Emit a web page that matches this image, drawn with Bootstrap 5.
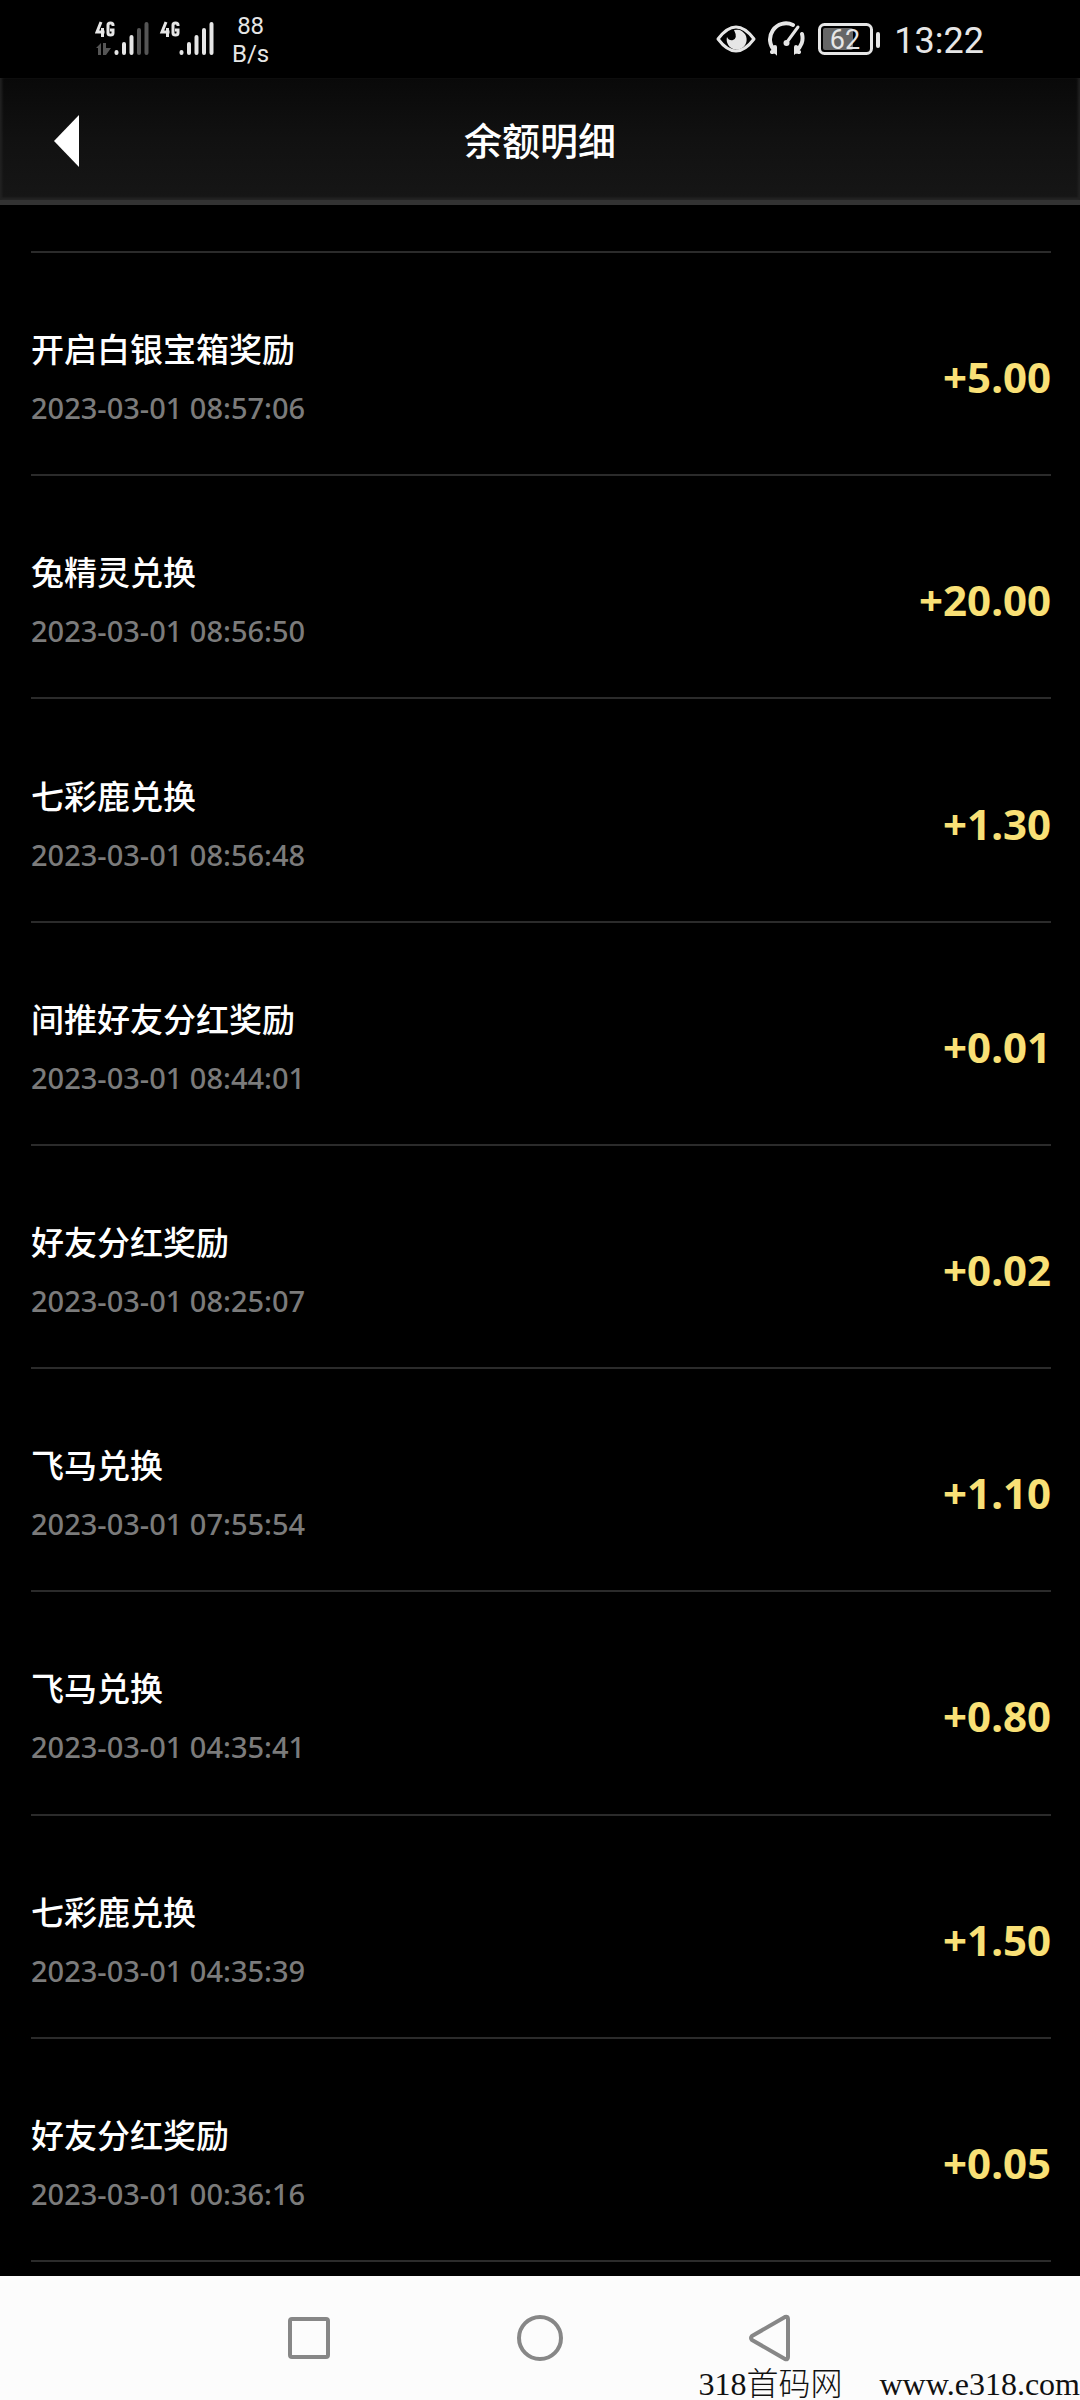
<!DOCTYPE html>
<html lang="zh-CN" data-bs-theme="dark">
<head>
<meta charset="utf-8">
<meta name="viewport" content="width=device-width, initial-scale=1">
<title>余额明细</title>
<link href="https://cdn.jsdelivr.net/npm/bootstrap@5.3.0/dist/css/bootstrap.min.css" rel="stylesheet">
<style>
body{background:#000;color:#fff;font-family:"Noto Sans","Noto Sans CJK SC",sans-serif}
.status-bar{height:78px;padding:0 96px 0 95px;color:#e6e6e6;font-family:Roboto,sans-serif}
.status-bar svg{display:block}
.net-speed{font-size:24px;line-height:28px;margin-left:17px;padding-top:2px}
.clock{font-size:36px;line-height:40px;margin-left:12px;padding-top:3px}
.title-bar{height:127px;background:linear-gradient(#090909,#111 50%,#161616);border-bottom:5px solid #333;box-shadow:inset 3px 0 3px -1px #222,inset -3px 0 3px -1px #222,inset 0 -3px 3px -1px #2a2a2a}
.title-bar h1{font:500 38px/48px "Noto Sans CJK SC",sans-serif}
.back-btn{left:30px;padding:16px 24px 12px}
.records{margin:46px 29px 14px 31px;border-top:2px solid #2b2b2b}
.record{border-bottom:2px solid #2b2b2b;padding-top:27px}
.record h2{font:500 33px/44px "Noto Sans CJK SC",sans-serif;margin-bottom:18px}
.record time{display:block;color:#7b7b7b;font-size:29px;line-height:40px;font-weight:500}
.amount{color:#f9e076;font-size:42px;line-height:48px;font-weight:700}
.nav-keys{height:124px;background:#fcfcfc;padding:0 194px}
.nav-keys svg{display:block}
.site-mark{right:0;bottom:0;gap:37px;color:#111;font:300 32px/32px "Liberation Serif","Noto Sans CJK SC",serif}
.site-mark a{color:#111}
</style>
<script src="https://cdn.jsdelivr.net/npm/bootstrap@5.3.0/dist/js/bootstrap.bundle.min.js"></script>
</head>
<body>
<div class="d-flex flex-column min-vh-100">
  <div class="status-bar d-flex align-items-center justify-content-between">
    <div class="d-flex align-items-center">
      <svg width="120" height="44" viewBox="0 0 120 44" fill="none" stroke-linecap="round" stroke-width="4" aria-label="4G">
        <g stroke="#e6e6e6">
          <path stroke-width="3" stroke-linecap="butt" d="M6 5L2 15H9.500M7.500 11V20M18 9V8Q18 6 15.500 6T13 8V16Q13 18 15.500 18T18 16V13H15"/>
          <path d="M21.500 35V36M29 27V36M36.500 20V36"/>
          <path stroke="#555" d="M44 13V36M51.500 7V36"/>
          <path stroke-width="3" stroke-linecap="butt" d="M71 5L67 15H74.500M72.500 11V20M83 9V8Q83 6 80.500 6T78 8V16Q78 18 80.500 18T83 16V13H80"/>
          <path d="M86.500 35V36M94 27V36M101.500 20V36M109 13V36M116.500 7V36"/>
        </g>
        <path fill="#555" d="M1 31L6 26V38H3V31ZM8 26H11V31H16L11 38H8Z"/>
      </svg>
      <div class="net-speed text-center"><div>88</div><div>B/s</div></div>
    </div>
    <div class="d-flex align-items-center">
      <svg width="166" height="36" viewBox="0 0 166 36" fill="none" stroke="#e6e6e6" stroke-width="3" stroke-linecap="round" stroke-linejoin="round">
        <path d="M2 18Q20-6 38 18Q20 42 2 18Z"/>
        <path fill="#e6e6e6" stroke="none" d="M18 9A10 10 0 1 1 11 16Q13 20 17 19Q22 17 18 9Z"/>
        <path stroke-width="4" d="M77 4A16 16 0 0 0 59 30V26M59 30L56 31M86 13A16 16 0 0 1 80 30V26M80 30L83 31" stroke-linejoin="miter"/>
        <path d="M71 21L82 6"/><circle cx="70.500" cy="22" r="3" fill="#e6e6e6" stroke="none"/>
        <rect x="103.500" y="3.500" width="52" height="29" rx="5"/>
        <rect x="107" y="7" width="30" height="22" rx="2" fill="#666" stroke="none"/>
        <path stroke-width="4" d="M162 13V25"/>
        <text x="129" y="28" text-anchor="middle" font-size="27" fill="#e6e6e6" stroke="none">62</text>
      </svg>
      <div class="clock">13:22</div>
    </div>
  </div>
  <header class="title-bar position-relative d-flex align-items-center justify-content-center">
    <button class="back-btn btn border-0 position-absolute" type="button" aria-label="返回"><svg class="d-block" width="25" height="52" viewBox="0 0 25 52" fill="#fff"><path d="M25 0V52L0 26Z"/></svg></button>
    <h1 class="m-0">余额明细</h1>
  </header>
  <main class="records d-flex flex-column flex-grow-1">
    <article class="record d-flex flex-fill align-items-center justify-content-between"><div><h2>开启白银宝箱奖励</h2><time>2023-03-01 08:57:06</time></div><span class="amount">+5.00</span></article>
    <article class="record d-flex flex-fill align-items-center justify-content-between"><div><h2>兔精灵兑换</h2><time>2023-03-01 08:56:50</time></div><span class="amount">+20.00</span></article>
    <article class="record d-flex flex-fill align-items-center justify-content-between"><div><h2>七彩鹿兑换</h2><time>2023-03-01 08:56:48</time></div><span class="amount">+1.30</span></article>
    <article class="record d-flex flex-fill align-items-center justify-content-between"><div><h2>间推好友分红奖励</h2><time>2023-03-01 08:44:01</time></div><span class="amount">+0.01</span></article>
    <article class="record d-flex flex-fill align-items-center justify-content-between"><div><h2>好友分红奖励</h2><time>2023-03-01 08:25:07</time></div><span class="amount">+0.02</span></article>
    <article class="record d-flex flex-fill align-items-center justify-content-between"><div><h2>飞马兑换</h2><time>2023-03-01 07:55:54</time></div><span class="amount">+1.10</span></article>
    <article class="record d-flex flex-fill align-items-center justify-content-between"><div><h2>飞马兑换</h2><time>2023-03-01 04:35:41</time></div><span class="amount">+0.80</span></article>
    <article class="record d-flex flex-fill align-items-center justify-content-between"><div><h2>七彩鹿兑换</h2><time>2023-03-01 04:35:39</time></div><span class="amount">+1.50</span></article>
    <article class="record d-flex flex-fill align-items-center justify-content-between"><div><h2>好友分红奖励</h2><time>2023-03-01 00:36:16</time></div><span class="amount">+0.05</span></article>
  </main>
  <nav class="nav-keys position-relative d-flex align-items-center" aria-label="系统导航">
    <div class="d-flex flex-fill justify-content-around">
      <button class="btn border-0 p-0" type="button" aria-label="最近任务"><svg width="48" height="48" viewBox="0 0 48 48" fill="none" stroke="#878787" stroke-width="4"><rect x="5" y="5" width="38" height="38" rx="2"/></svg></button>
      <button class="btn border-0 p-0" type="button" aria-label="主页"><svg width="48" height="48" viewBox="0 0 48 48" fill="none" stroke="#878787" stroke-width="4"><circle cx="24" cy="24" r="21"/></svg></button>
      <button class="btn border-0 p-0" type="button" aria-label="返回上一页"><svg width="48" height="48" viewBox="0 0 48 48" fill="none" stroke="#878787" stroke-width="4" stroke-linejoin="round"><path d="M5 22L38 3Q41 2 41 5V43Q41 46 38 45L5 26Q3 24 5 22Z"/></svg></button>
    </div>
    <div class="site-mark position-absolute d-flex"><span>318首码网</span><a class="text-decoration-none" href="#">www.e318.com</a></div>
  </nav>
</div>
</body>
</html>
